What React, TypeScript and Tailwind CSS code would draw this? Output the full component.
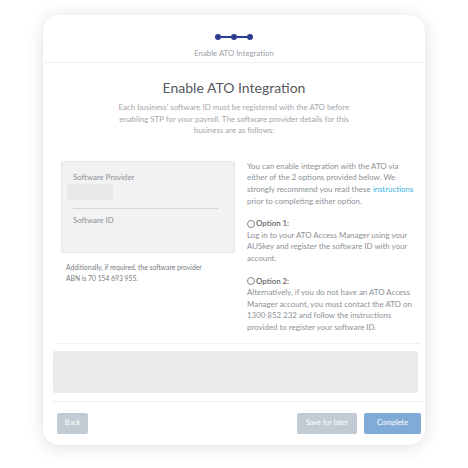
import React from "react";

const font = { fontFamily: '"Lato", "Open Sans", Arial, sans-serif' };

function Steps() {
  return (
    <div className="flex items-center justify-center">
      <span className="h-[6px] w-[6px] rounded-full bg-[#2c3a8f]" />
      <span className="h-[1.5px] w-[10px] bg-[#2c3a8f]" />
      <span className="h-[6px] w-[6px] rounded-full bg-[#2c3a8f]" />
      <span className="h-[1.5px] w-[10px] bg-[#2c3a8f]" />
      <span className="h-[6px] w-[6px] rounded-full bg-[#2c3a8f]" />
    </div>
  );
}

function Option({ label, children }: { label: string; children: React.ReactNode }) {
  return (
    <div>
      <div className="flex items-center gap-[1px] text-[#666]">
        <span className="h-[8px] w-[8px] rounded-full border border-[#888] bg-white" />
        <span className="font-semibold">{label}</span>
      </div>
      <p>{children}</p>
    </div>
  );
}

export default function App() {
  return (
    <div className="h-[468px] w-[468px] bg-white pl-[43px] pt-[15px]" style={font}>
      <div className="flex h-[430px] w-[382px] flex-col rounded-[16px] bg-white shadow-[0_2px_18px_rgba(0,0,0,0.13)]">
        <div className="flex flex-col items-center border-b border-[#f0f0f0] pb-[3px] pt-[19px]">
          <Steps />
          <div className="mt-[8px] text-[7.8px] leading-[11px] text-[#9aa0a8]">Enable ATO Integration</div>
        </div>

        <h1 className="mt-[16px] text-center text-[14px] leading-[18px] text-[#55595f]">Enable ATO Integration</h1>
        <p className="mx-auto mt-[5px] w-[250px] text-center text-[7.9px] leading-[11.6px] text-[#a3a6aa]">
          Each business' software ID must be registered with the ATO before enabling STP for your payroll. The
          software provider details for this business are as follows:
        </p>

        <div className="mt-[24px] flex gap-[12px] pl-[18px] pr-[8px]">
          <div className="w-[174px] shrink-0">
            <div className="h-[92px] rounded-[2px] border border-[#e6e6e6] bg-[#f2f2f2] pl-[5px] pr-[16px] pt-[10px] text-[7.8px] text-[#8d9196]">
              <div className="pl-[6px] leading-[11px]">Software Provider</div>
              <div className="mt-[1px] h-[16px] w-[46px] rounded-[2px] bg-[#e8e8e8]" />
              <div className="ml-[6px] mt-[8px] h-px bg-[#d3d6d8]" />
              <div className="mt-[6px] pl-[6px] leading-[11px]">Software ID</div>
            </div>
            <p className="mt-[9px] pl-[5px] text-[6.75px] leading-[11px] text-[#777b80]">
              Additionally, if required, the software provider
              <br />
              ABN is 70 154 693 955.
            </p>
          </div>

          <div className="flex flex-col gap-[11px] text-[7.9px] leading-[11.6px] text-[#8d9196]">
            <p>
              You can enable integration with the ATO via either of the 2 options provided below. We strongly
              recommend you read these <span className="text-[#3bb4e5]">instructions</span> prior to completing
              either option.
            </p>
            <Option label="Option 1:">
              Log in to your ATO Access Manager using your AUSkey and register the software ID with your account.
            </Option>
            <Option label="Option 2:">
              Alternatively, if you do not have an ATO Access Manager account, you must contact the ATO on 1300 852
              232 and follow the instructions provided to register your software ID.
            </Option>
          </div>
        </div>

        <div className="ml-[13px] mr-[5px] mt-[9px] h-px bg-[#f0f0f0]" />
        <div className="ml-[10px] mr-[7px] mt-[7px] h-[42px] rounded-[2px] bg-[#ebebeb]" />
        <div className="ml-[9px] mt-[8px] h-px bg-[#f0f0f0]" />

        <div className="mt-[11px] flex items-center pl-[14px] pr-[4px] text-[7.3px] text-white">
          <button className="h-[21px] w-[31px] rounded-[2px] bg-[#c2cad4]">Back</button>
          <div className="flex-1" />
          <button className="h-[21px] w-[60px] rounded-[2px] bg-[#c2cad4]">Save for later</button>
          <button className="ml-[7px] h-[21px] w-[57px] rounded-[2px] bg-[#80abd6]">Complete</button>
        </div>
      </div>
    </div>
  );
}
